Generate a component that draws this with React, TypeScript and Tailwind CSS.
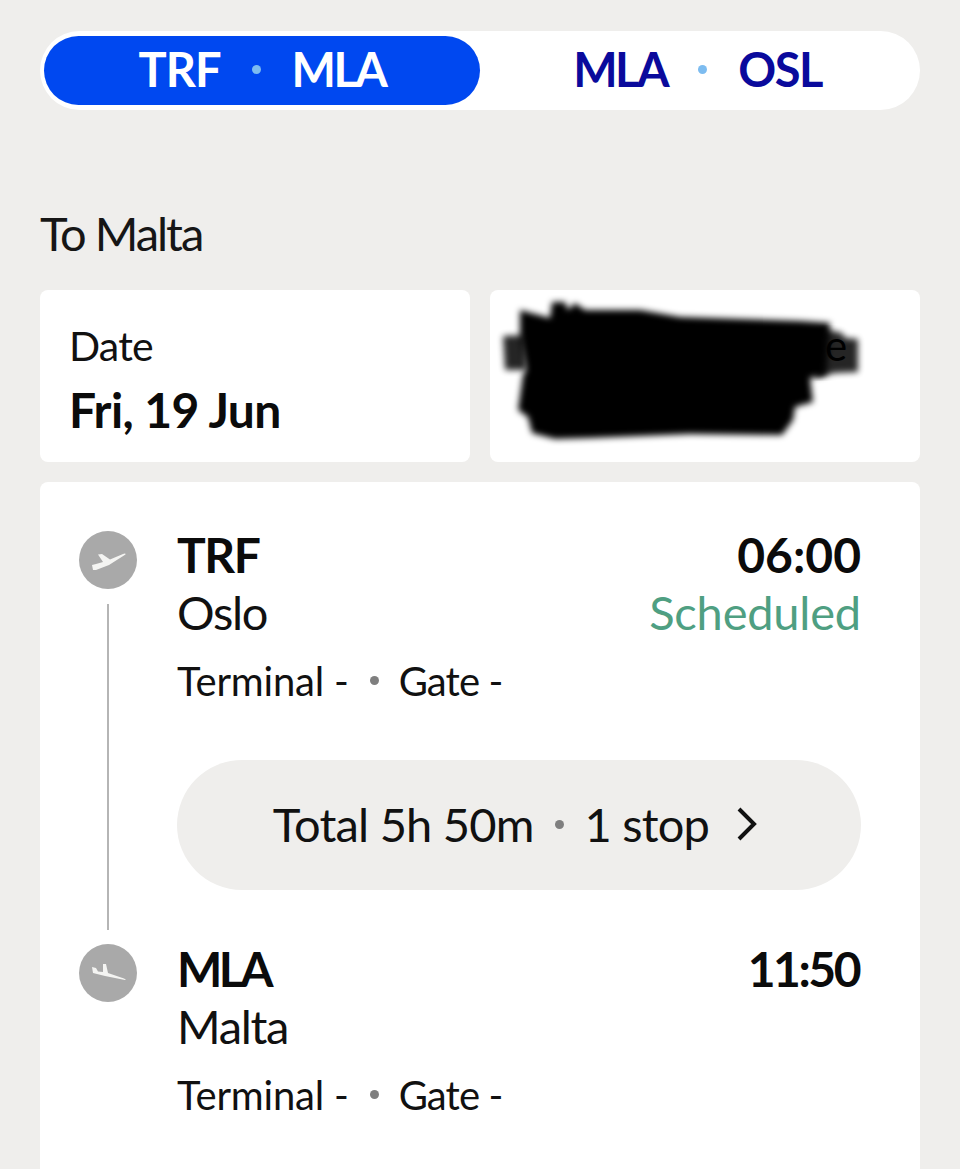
const font = "font-['Lato','Open_Sans',sans-serif]"

function Plane({ landing }: { landing?: boolean }) {
  return (
    <div className="flex h-[58px] w-[58px] shrink-0 items-center justify-center rounded-full bg-[#a9a9a9]">
      <svg width="58" height="58" viewBox="0 0 58 58" fill="#f4f4f2">
        {landing ? (
          <path d="M13 23l4 1 2 3.500 5 .5v-8h3l2 9 16 5.500q3 1.500 1 1.500l-20-4-12-3z" />
        ) : (
          <path d="M13 34l4-1 7-2-5-7.500 4-.500 8 5.500 13-5.500q3-1 2.500.500L30 34l-13 5h-3z" />
        )}
      </svg>
    </div>
  )
}

function Dot({ className }: { className: string }) {
  return <span className={`inline-block h-[9px] w-[9px] rounded-full ${className}`} />
}

interface StopProps {
  code: string
  codeTracking: string
  city: string
  time: string
  timeTracking?: string
  status?: string
}

function Stop({ code, codeTracking, city, time, timeTracking, status }: StopProps) {
  return (
    <div>
      <div className="flex h-[58px] items-center justify-between pb-[2px] text-[48px] font-bold leading-none text-[#0b0b0b]">
        <span className={codeTracking}>{code}</span>
        <span className={timeTracking}>{time}</span>
      </div>
      <div className="flex h-[57px] items-center justify-between pb-[2px] text-[47px] leading-none text-[#111]">
        <span className="tracking-[-1.3px]">{city}</span>
        {status && <span className="tracking-[-0.2px] text-[#4f9f82]">{status}</span>}
      </div>
      <div className="mt-[12px] flex h-[55px] items-center pb-[2px] text-[40px] leading-none tracking-[-0.2px] text-[#111]">
        <span>Terminal -</span>
        <Dot className="ml-[21px] mr-[20px] bg-[#7f7f7f]" />
        <span className="tracking-[-0.9px]">Gate -</span>
      </div>
    </div>
  )
}

export default function App() {
  return (
    <div className={`h-[1169px] overflow-hidden bg-[#efeeec] px-[40px] pt-[31px] ${font}`}>
      <div className="flex h-[79px] rounded-full bg-white p-[5px] pl-[4px]">
        <div className="flex w-[436px] items-center justify-center rounded-full bg-[#0048f0] pb-[2px] text-[47px] font-bold leading-none text-white">
          <span className="tracking-[-1px]">TRF</span>
          <Dot className="mx-[31px] bg-[#7dbcf0]" />
          <span className="tracking-[-2.5px]">MLA</span>
        </div>
        <div className="flex flex-1 items-center justify-center pb-[2px] text-[47px] font-bold leading-none text-[#0a0a9c]">
          <span className="tracking-[-2.5px]">MLA</span>
          <Dot className="mx-[31px] bg-[#7dbcf0]" />
          <span className="tracking-[-1.5px]">OSL</span>
        </div>
      </div>

      <div className="mt-[98px] text-[47px] leading-[50px] tracking-[-2px] text-[#161616]">To Malta</div>

      <div className="mt-[32px] grid grid-cols-2 gap-[20px]">
        <div className="h-[172px] rounded-[8px] bg-white px-[29px] pt-[32px]">
          <div className="text-[41px] leading-[48px] tracking-[-0.8px] text-[#111]">Date</div>
          <div className="mt-[15px] text-[48px] font-bold leading-[50px] tracking-[-0.6px] text-[#0b0b0b]">Fri, 19 Jun</div>
        </div>
        <div className="relative h-[172px] overflow-hidden rounded-[8px] bg-white">
          <svg className="absolute inset-0" width="430" height="172" viewBox="0 0 430 172">
            <defs>
              <filter id="smudge" x="-5%" y="-5%" width="110%" height="110%">
                <feGaussianBlur stdDeviation="3" />
              </filter>
            </defs>
            <path filter="url(#smudge)" fill="#000" opacity="0.85" d="M13 46L36 45V80H15ZM330 38L352 43L355 48L368 49V82L345 83L325 88Z" />
            <text x="335" y="71" fontSize="42" fill="#000">e</text>
            <path
              filter="url(#smudge)"
              fill="#000"
              d="M30 20L60 28L62 12H75L78 20L85 13L95 20L150 20L190 27L250 29L310 31L340 33L336 85L320 88L323 112L305 117L303 130L292 145L200 144L100 148L65 149L42 143L38 127L28 120L33 85L36 80L30 45Z"
            />
          </svg>
        </div>
      </div>

      <div className="mt-[20px] flex h-[800px] rounded-t-[8px] bg-white pl-[39px] pr-[59px] pt-[45px]">
        <div className="mt-[4px] flex w-[58px] shrink-0 flex-col items-center">
          <Plane />
          <div className="mt-[15px] h-[326px] w-[2px] bg-[#b5b5b5]" />
          <div className="mt-[14px]">
            <Plane landing />
          </div>
        </div>
        <div className="ml-[40px] flex-1">
          <Stop code="TRF" codeTracking="tracking-[-1.5px]" city="Oslo" time="06:00" status="Scheduled" />
          <div className="mt-[51px] flex h-[130px] items-center justify-center rounded-[65px] bg-[#efeeec] pb-[2px] pr-[6px] text-[47px] leading-none tracking-[-0.8px] text-[#111]">
            <span>Total 5h 50m</span>
            <Dot className="mx-[21px] bg-[#7f7f7f]" />
            <span>1 stop</span>
            <svg className="ml-[26px]" width="24" height="36" viewBox="0 0 24 36" fill="none" stroke="#111" strokeWidth="4">
              <path d="M4 3l15 15L4 33" />
            </svg>
          </div>
          <div className="mt-[51px]">
            <Stop code="MLA" codeTracking="tracking-[-3.5px]" city="Malta" time="11:50" timeTracking="pr-[2px] tracking-[-2.5px]" />
          </div>
        </div>
      </div>
    </div>
  )
}
